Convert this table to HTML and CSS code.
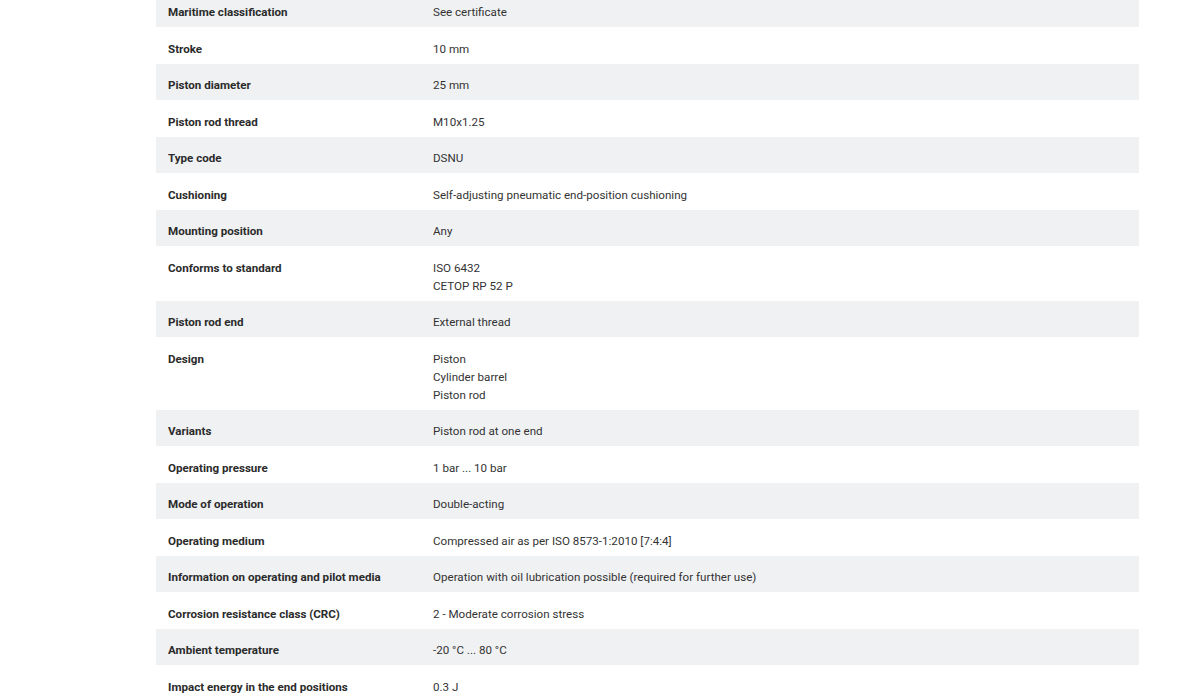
FILE: index.html
```html
<!DOCTYPE html>
<html lang="en">
<head>
<meta charset="utf-8">
<title>Technical data</title>
<link rel="stylesheet" href="styles.css">
</head>
<body>
<div class="page">
  <div class="specs">
    <div class="row shade first"><div class="label">Maritime classification</div><div class="value">See certificate</div></div>
    <div class="row"><div class="label">Stroke</div><div class="value">10 mm</div></div>
    <div class="row shade"><div class="label">Piston diameter</div><div class="value">25 mm</div></div>
    <div class="row"><div class="label">Piston rod thread</div><div class="value">M10x1.25</div></div>
    <div class="row shade"><div class="label">Type code</div><div class="value">DSNU</div></div>
    <div class="row"><div class="label">Cushioning</div><div class="value">Self-adjusting pneumatic end-position cushioning</div></div>
    <div class="row shade"><div class="label">Mounting position</div><div class="value">Any</div></div>
    <div class="row"><div class="label">Conforms to standard</div><div class="value">ISO 6432<br>CETOP RP 52 P</div></div>
    <div class="row shade"><div class="label">Piston rod end</div><div class="value">External thread</div></div>
    <div class="row"><div class="label">Design</div><div class="value">Piston<br>Cylinder barrel<br>Piston rod</div></div>
    <div class="row shade"><div class="label">Variants</div><div class="value">Piston rod at one end</div></div>
    <div class="row"><div class="label">Operating pressure</div><div class="value">1 bar ... 10 bar</div></div>
    <div class="row shade"><div class="label">Mode of operation</div><div class="value">Double-acting</div></div>
    <div class="row"><div class="label">Operating medium</div><div class="value">Compressed air as per ISO 8573-1:2010 [7:4:4]</div></div>
    <div class="row shade"><div class="label">Information on operating and pilot media</div><div class="value">Operation with oil lubrication possible (required for further use)</div></div>
    <div class="row"><div class="label">Corrosion resistance class (CRC)</div><div class="value">2 - Moderate corrosion stress</div></div>
    <div class="row shade"><div class="label">Ambient temperature</div><div class="value">-20 °C ... 80 °C</div></div>
    <div class="row"><div class="label">Impact energy in the end positions</div><div class="value">0.3 J</div></div>
  </div>
</div>
</body>
</html>
```
FILE: styles.css
```css
html, body {
  margin: 0;
  padding: 0;
  background: #ffffff;
  overflow: hidden;
}
.page {
  padding: 0 61px 0 156px;
}
.specs {
  display: flex;
  flex-direction: column;
  margin-top: -9.5px;
  font-family: "Roboto", "Noto Sans", "Liberation Sans", sans-serif;
  font-size: 11.6px;
  line-height: 18px;
  color: #333333;
}
.row {
  display: grid;
  grid-template-columns: 265px 1fr;
  padding: 12.75px 12px 5.75px;
}
.row.shade {
  background: #f0f1f3;
}
.label {
  font-weight: bold;
  color: #2b2b2b;
}
.value {
  font-weight: normal;
}
```
